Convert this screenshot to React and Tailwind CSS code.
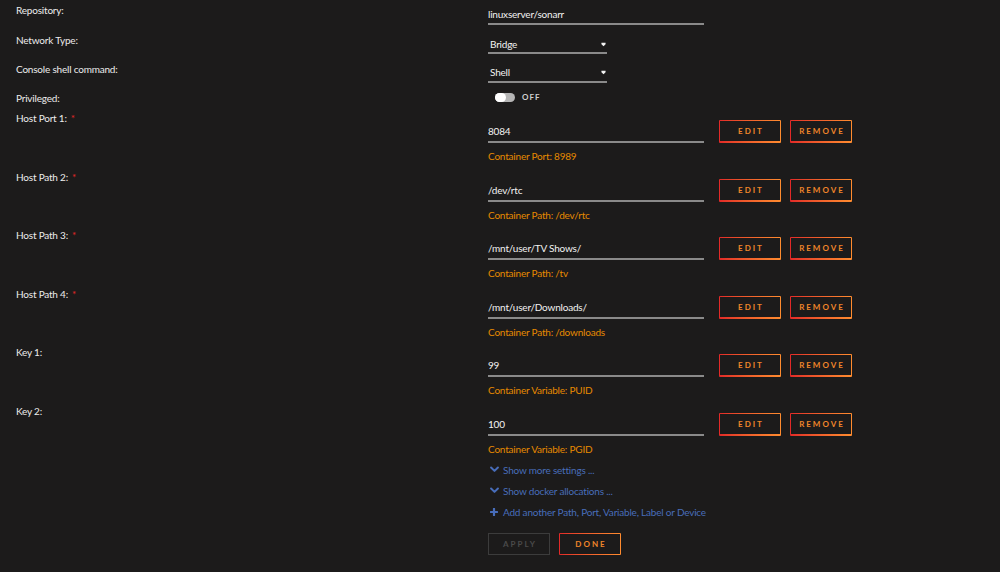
import React from "react";

const font = { fontFamily: "Lato, 'Open Sans', sans-serif", letterSpacing: "-0.2px" };

function GradBtn({ children }) {
  return (
    <div className="p-[1px] bg-gradient-to-r from-[#e22828] to-[#ff8c2f] rounded-[1px]">
      <div className="w-[60px] h-[20px] bg-[#1c1b1b] flex items-center justify-center">
        <span className="text-[8px] font-bold tracking-[2px] text-[#f0862a] leading-none pl-[2px]">{children}</span>
      </div>
    </div>
  );
}

function Chevron() {
  return (
    <svg width="9" height="7" viewBox="0 0 10 7" className="ml-[2px] mr-[4px]">
      <path d="M1.2 1.2 L5 5 L8.8 1.2" fill="none" stroke="#486dba" strokeWidth="2.2" strokeLinecap="round" strokeLinejoin="round" />
    </svg>
  );
}

function Plus() {
  return (
    <svg width="8" height="8" viewBox="0 0 8 8" className="ml-[2px] mr-[5px]">
      <path d="M4 0.8 V7.2 M0.8 4 H7.2" stroke="#486dba" strokeWidth="2.2" strokeLinecap="round" />
    </svg>
  );
}

function Arrow() {
  return (
    <svg width="5" height="5" viewBox="0 0 6 6">
      <path d="M0.5 1 H5.5 V2.6 L3 5.2 L0.5 2.6 Z" fill="#f2f2f2" />
    </svg>
  );
}

function Entry({ label, required, value, sub }) {
  return (
    <div className="flex h-[58.6px]">
      <div className="w-[488px] pl-4 text-[10px] leading-[12px] text-[#ececec]">
        {label}
        {required && <span className="text-[#e22828] ml-[4px]">*</span>}
      </div>
      <div className="flex flex-col">
        <div className="flex">
          <div className="w-[216px] pt-[13px] pb-[4px] border-b-2 border-[#8a8a8a] text-[10px] leading-[12px] text-[#f2f2f2]">
            {value}
          </div>
          <div className="flex gap-[9px] ml-[15px] mt-[8px]">
            <GradBtn>EDIT</GradBtn>
            <GradBtn>REMOVE</GradBtn>
          </div>
        </div>
        <div className="mt-[7px] text-[10px] leading-[12px] text-[#e68a00]">{sub}</div>
      </div>
    </div>
  );
}

export default function App() {
  const entries = [
    ["Host Port 1:", true, "8084", "Container Port: 8989"],
    ["Host Path 2:", true, "/dev/rtc", "Container Path: /dev/rtc"],
    ["Host Path 3:", true, "/mnt/user/TV Shows/", "Container Path: /tv"],
    ["Host Path 4:", true, "/mnt/user/Downloads/", "Container Path: /downloads"],
    ["Key 1:", false, "99", "Container Variable: PUID"],
    ["Key 2:", false, "100", "Container Variable: PGID"],
  ];
  return (
    <div className="w-[1000px] h-[572px] bg-[#1c1b1b] overflow-hidden" style={font}>
      {/* Repository */}
      <div className="flex h-[30px]">
        <div className="w-[488px] pl-4 pt-[4px] text-[10px] leading-[12px] text-[#ececec]">Repository:</div>
        <div className="w-[216px] pt-[8px] pb-[3px] border-b-2 border-[#8a8a8a] h-fit text-[10px] leading-[12px] text-[#f2f2f2]">
          linuxserver/sonarr
        </div>
      </div>
      {/* Network */}
      <div className="flex h-[29px]">
        <div className="w-[488px] pl-4 pt-[4px] text-[10px] leading-[12px] text-[#ececec]">Network Type:</div>
        <div className="w-[119px] pt-[8px] pb-[2px] border-b-2 border-[#8a8a8a] h-fit flex items-center justify-between pl-[2px] pr-[1px] text-[10px] leading-[12px] text-[#f2f2f2]">
          <span>Bridge</span>
          <Arrow />
        </div>
      </div>
      {/* Console */}
      <div className="flex h-[29px]">
        <div className="w-[488px] pl-4 pt-[4px] text-[10px] leading-[12px] text-[#ececec]">Console shell command:</div>
        <div className="w-[119px] pt-[7px] pb-[3px] border-b-2 border-[#8a8a8a] h-fit flex items-center justify-between pl-[2px] pr-[1px] text-[10px] leading-[12px] text-[#f2f2f2]">
          <span>Shell</span>
          <Arrow />
        </div>
      </div>
      {/* Privileged */}
      <div className="flex h-[24px]">
        <div className="w-[488px] pl-4 pt-[4px] text-[10px] leading-[12px] text-[#ececec]">Privileged:</div>
        <div className="flex items-center ml-[7px] mt-[4px] h-[10px]">
          <div className="w-[20px] h-[9px] rounded-full bg-[#b5b5b5] relative">
            <div className="absolute left-0 top-0 w-[11px] h-[9px] rounded-full bg-white" />
          </div>
          <span className="ml-[7px] text-[8px] font-bold tracking-[1px] text-[#d0d0d0]">OFF</span>
        </div>
      </div>
      {entries.map(([l, r, v, s]) => (
        <Entry key={l} label={l} required={r} value={v} sub={s} />
      ))}
      <div className="pl-[488px] text-[10px] leading-[12px] text-[#486dba]">
        <div className="h-[21px] flex items-start">
          <div className="flex items-center"><Chevron /><span>Show more settings ...</span></div>
        </div>
        <div className="h-[21px] flex items-start">
          <div className="flex items-center"><Chevron /><span>Show docker allocations ...</span></div>
        </div>
        <div className="h-[21px] flex items-start">
          <div className="flex items-center"><Plus /><span>Add another Path, Port, Variable, Label or Device</span></div>
        </div>
        <div className="flex gap-[9px] mt-[6px]">
          <div className="w-[62px] h-[22px] border border-[#3c3c3c] flex items-center justify-center">
            <span className="text-[8px] font-bold tracking-[2px] text-[#4a4a4a] leading-none pl-[2px]">APPLY</span>
          </div>
          <GradBtn>DONE</GradBtn>
        </div>
      </div>
    </div>
  );
}
